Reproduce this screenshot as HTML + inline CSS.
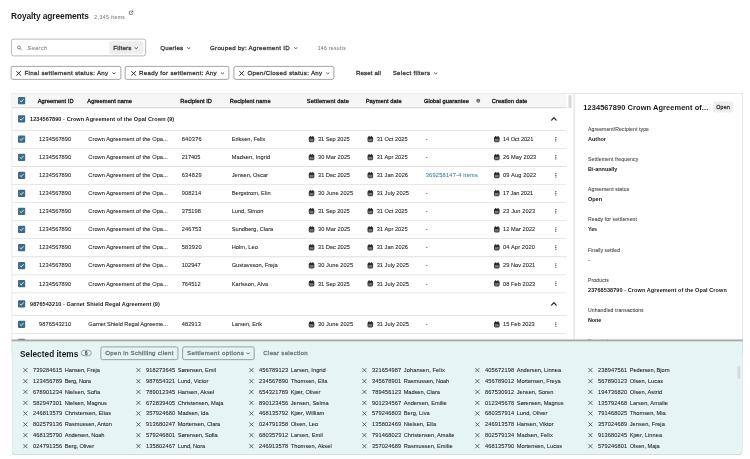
<!DOCTYPE html><html lang="en"><head><meta charset="utf-8"><title>Royalty agreements</title>
<style>html,body{margin:0;padding:0}
body{width:750px;height:459px;overflow:hidden;background:#ffffff;position:relative;font-family:"Liberation Sans", sans-serif;-webkit-font-smoothing:antialiased}
#app{position:absolute;left:0;top:0;width:3000.0px;height:1836.0px;overflow:hidden;transform:scale(0.25);transform-origin:0 0;backface-visibility:hidden}
#app div,#app svg,#app .t{position:absolute;box-sizing:content-box}
#app svg{overflow:visible}
.t{white-space:pre;display:block}</style></head><body><div id="app">
<svg style="left:515.6px;top:41.6px" width="17.2" height="17.2" viewBox="0 0 4.3 4.3"><path d="M1.7 0.7 H1.1 Q0.4 0.7 0.4 1.4 V3.2 Q0.4 3.9 1.1 3.9 H2.9 Q3.6 3.9 3.6 3.2 V2.6" fill="none" stroke="#333" stroke-width="0.65"/><path d="M2.5 0.4 H3.9 V1.8 M3.8 0.5 L2.1 2.2" fill="none" stroke="#333" stroke-width="0.65"/></svg>
<div style="left:44px;top:155.2px;width:534px;height:63.6px;border:3.6px solid #a2a2a2;border-radius:10px;background:#fff"></div>
<svg style="left:68.4px;top:181.6px" width="19.6" height="19.6" viewBox="0 0 4.4 4.4"><circle cx="1.8" cy="1.8" r="1.3" fill="none" stroke="#5e5e5e" stroke-width="0.65"/><path d="M2.8 2.8 L4 4" stroke="#5e5e5e" stroke-width="0.7" stroke-linecap="round"/></svg>
<div style="left:437.2px;top:165.2px;width:136.8px;height:51.6px;background:#eeeeee;border-radius:8px"></div>
<svg style="left:539.2px;top:188.6px" width="12" height="8.4" viewBox="0 0 3.0 2.10"><path d="M0.2 0.3 L1.5 1.5 L2.8 0.3" fill="none" stroke="#333" stroke-width="0.85" stroke-linecap="round" stroke-linejoin="round"/></svg>
<svg style="left:748.8px;top:188.6px" width="12" height="8.4" viewBox="0 0 3.0 2.10"><path d="M0.2 0.3 L1.5 1.5 L2.8 0.3" fill="none" stroke="#333" stroke-width="0.85" stroke-linecap="round" stroke-linejoin="round"/></svg>
<svg style="left:1176.8px;top:188.6px" width="12" height="8.4" viewBox="0 0 3.0 2.10"><path d="M0.2 0.3 L1.5 1.5 L2.8 0.3" fill="none" stroke="#333" stroke-width="0.85" stroke-linecap="round" stroke-linejoin="round"/></svg>
<div style="left:43.2px;top:264.4px;width:435.6px;height:48.4px;border:3.4px solid #858585;border-radius:8.8px;background:#fff"></div>
<svg style="left:64.8px;top:283.6px" width="19.2" height="19.2" viewBox="0 0 4.8 4.8"><path d="M0.4 0.4 L4.3999999999999995 4.3999999999999995 M4.3999999999999995 0.4 L0.4 4.3999999999999995" fill="none" stroke="#2a2a2a" stroke-width="1.0" stroke-linecap="round"/></svg>
<svg style="left:450.4px;top:290.2px" width="12" height="8.4" viewBox="0 0 3.0 2.10"><path d="M0.2 0.3 L1.5 1.5 L2.8 0.3" fill="none" stroke="#333" stroke-width="0.85" stroke-linecap="round" stroke-linejoin="round"/></svg>
<div style="left:499.2px;top:264.4px;width:411.6px;height:48.4px;border:3.4px solid #858585;border-radius:8.8px;background:#fff"></div>
<svg style="left:524.8px;top:283.6px" width="19.2" height="19.2" viewBox="0 0 4.8 4.8"><path d="M0.4 0.4 L4.3999999999999995 4.3999999999999995 M4.3999999999999995 0.4 L0.4 4.3999999999999995" fill="none" stroke="#2a2a2a" stroke-width="1.0" stroke-linecap="round"/></svg>
<svg style="left:884.4px;top:290.2px" width="12" height="8.4" viewBox="0 0 3.0 2.10"><path d="M0.2 0.3 L1.5 1.5 L2.8 0.3" fill="none" stroke="#333" stroke-width="0.85" stroke-linecap="round" stroke-linejoin="round"/></svg>
<div style="left:934px;top:264.4px;width:396.8px;height:48.4px;border:3.4px solid #858585;border-radius:8.8px;background:#fff"></div>
<svg style="left:956.8px;top:283.6px" width="19.2" height="19.2" viewBox="0 0 4.8 4.8"><path d="M0.4 0.4 L4.3999999999999995 4.3999999999999995 M4.3999999999999995 0.4 L0.4 4.3999999999999995" fill="none" stroke="#2a2a2a" stroke-width="1.0" stroke-linecap="round"/></svg>
<svg style="left:1304.8px;top:290.2px" width="12" height="8.4" viewBox="0 0 3.0 2.10"><path d="M0.2 0.3 L1.5 1.5 L2.8 0.3" fill="none" stroke="#333" stroke-width="0.85" stroke-linecap="round" stroke-linejoin="round"/></svg>
<svg style="left:1737.2px;top:290.2px" width="12" height="8.4" viewBox="0 0 3.0 2.10"><path d="M0.2 0.3 L1.5 1.5 L2.8 0.3" fill="none" stroke="#333" stroke-width="0.85" stroke-linecap="round" stroke-linejoin="round"/></svg>
<div style="left:46px;top:372px;width:2244.8px;height:1048px;border:3.2px solid #e3e3e3;border-bottom:none;background:#fff"></div>
<div style="left:49.2px;top:375.2px;width:2216.8px;height:56px;background:#f6f6f6"></div>
<div style="left:49.2px;top:429.2px;width:2216.8px;height:4px;background:#d4d4d4"></div>
<div style="left:2274.4px;top:380px;width:11.2px;height:53.6px;background:#d6d6d6;border-radius:5.6px"></div>
<svg style="left:72.4px;top:388.4px" width="28.8" height="28.8" viewBox="0 0 7 7"><rect x="0" y="0" width="7" height="7" rx="1" fill="#3d6b85"/><path d="M2 3.7 L3.1 4.8 L5.2 2.4" fill="none" stroke="#fff" stroke-width="0.8" stroke-linecap="round" stroke-linejoin="round"/></svg>
<svg style="left:1904.8px;top:394.8px" width="16" height="16" viewBox="0 0 4 4"><circle cx="2" cy="2" r="1.9" fill="#666"/><path d="M2 1.8 V3" stroke="#fff" stroke-width="0.5"/><circle cx="2" cy="1.05" r="0.3" fill="#fff"/></svg>
<svg style="left:72.4px;top:461.2px" width="28.8" height="28.8" viewBox="0 0 7 7"><rect x="0" y="0" width="7" height="7" rx="1" fill="#3d6b85"/><path d="M2 3.7 L3.1 4.8 L5.2 2.4" fill="none" stroke="#fff" stroke-width="0.8" stroke-linecap="round" stroke-linejoin="round"/></svg>
<svg style="left:2204px;top:468.2px" width="23.2" height="14.8" viewBox="0 0 5.8 3.70"><path d="M0.6 3.10 L2.9 0.7 L5.2 3.10" fill="none" stroke="#222" stroke-width="1.2" stroke-linecap="round" stroke-linejoin="round"/></svg>
<div style="left:49.2px;top:520px;width:2216.8px;height:3.2px;background:#dcdcdc"></div>
<svg style="left:72.4px;top:542.4px" width="28.8" height="28.8" viewBox="0 0 7 7"><rect x="0" y="0" width="7" height="7" rx="1" fill="#3d6b85"/><path d="M2 3.7 L3.1 4.8 L5.2 2.4" fill="none" stroke="#fff" stroke-width="0.8" stroke-linecap="round" stroke-linejoin="round"/></svg>
<svg style="left:1234.8px;top:543.6px" width="22.4" height="24.8" viewBox="0 0 5 5.6"><rect x="0.4" y="1" width="4.2" height="4.2" rx="0.7" fill="#777" stroke="#2a2a2a" stroke-width="0.8"/><rect x="0.4" y="1" width="4.2" height="1.6" fill="#2a2a2a"/><path d="M1.4 0.3 V1.3 M3.6 0.3 V1.3" stroke="#2a2a2a" stroke-width="0.8" stroke-linecap="round"/></svg>
<svg style="left:1469.6px;top:543.6px" width="22.4" height="24.8" viewBox="0 0 5 5.6"><rect x="0.4" y="1" width="4.2" height="4.2" rx="0.7" fill="#777" stroke="#2a2a2a" stroke-width="0.8"/><rect x="0.4" y="1" width="4.2" height="1.6" fill="#2a2a2a"/><path d="M1.4 0.3 V1.3 M3.6 0.3 V1.3" stroke="#2a2a2a" stroke-width="0.8" stroke-linecap="round"/></svg>
<svg style="left:1976px;top:543.6px" width="22.4" height="24.8" viewBox="0 0 5 5.6"><rect x="0.4" y="1" width="4.2" height="4.2" rx="0.7" fill="#777" stroke="#2a2a2a" stroke-width="0.8"/><rect x="0.4" y="1" width="4.2" height="1.6" fill="#2a2a2a"/><path d="M1.4 0.3 V1.3 M3.6 0.3 V1.3" stroke="#2a2a2a" stroke-width="0.8" stroke-linecap="round"/></svg>
<svg style="left:2220.8px;top:547.6px" width="4.8" height="18.4" viewBox="0 0 1.2 4.6"><circle cx="0.6" cy="0.6" r="0.6" fill="#222"/><circle cx="0.6" cy="2.3" r="0.6" fill="#222"/><circle cx="0.6" cy="4.0" r="0.6" fill="#222"/></svg>
<div style="left:49.2px;top:592.2px;width:2216.8px;height:3.2px;background:#e0e0e0"></div>
<svg style="left:72.4px;top:614.6px" width="28.8" height="28.8" viewBox="0 0 7 7"><rect x="0" y="0" width="7" height="7" rx="1" fill="#3d6b85"/><path d="M2 3.7 L3.1 4.8 L5.2 2.4" fill="none" stroke="#fff" stroke-width="0.8" stroke-linecap="round" stroke-linejoin="round"/></svg>
<svg style="left:1234.8px;top:615.8px" width="22.4" height="24.8" viewBox="0 0 5 5.6"><rect x="0.4" y="1" width="4.2" height="4.2" rx="0.7" fill="#777" stroke="#2a2a2a" stroke-width="0.8"/><rect x="0.4" y="1" width="4.2" height="1.6" fill="#2a2a2a"/><path d="M1.4 0.3 V1.3 M3.6 0.3 V1.3" stroke="#2a2a2a" stroke-width="0.8" stroke-linecap="round"/></svg>
<svg style="left:1469.6px;top:615.8px" width="22.4" height="24.8" viewBox="0 0 5 5.6"><rect x="0.4" y="1" width="4.2" height="4.2" rx="0.7" fill="#777" stroke="#2a2a2a" stroke-width="0.8"/><rect x="0.4" y="1" width="4.2" height="1.6" fill="#2a2a2a"/><path d="M1.4 0.3 V1.3 M3.6 0.3 V1.3" stroke="#2a2a2a" stroke-width="0.8" stroke-linecap="round"/></svg>
<svg style="left:1976px;top:615.8px" width="22.4" height="24.8" viewBox="0 0 5 5.6"><rect x="0.4" y="1" width="4.2" height="4.2" rx="0.7" fill="#777" stroke="#2a2a2a" stroke-width="0.8"/><rect x="0.4" y="1" width="4.2" height="1.6" fill="#2a2a2a"/><path d="M1.4 0.3 V1.3 M3.6 0.3 V1.3" stroke="#2a2a2a" stroke-width="0.8" stroke-linecap="round"/></svg>
<svg style="left:2220.8px;top:619.8px" width="4.8" height="18.4" viewBox="0 0 1.2 4.6"><circle cx="0.6" cy="0.6" r="0.6" fill="#222"/><circle cx="0.6" cy="2.3" r="0.6" fill="#222"/><circle cx="0.6" cy="4.0" r="0.6" fill="#222"/></svg>
<div style="left:49.2px;top:664.4px;width:2216.8px;height:3.2px;background:#e0e0e0"></div>
<svg style="left:72.4px;top:686.8px" width="28.8" height="28.8" viewBox="0 0 7 7"><rect x="0" y="0" width="7" height="7" rx="1" fill="#3d6b85"/><path d="M2 3.7 L3.1 4.8 L5.2 2.4" fill="none" stroke="#fff" stroke-width="0.8" stroke-linecap="round" stroke-linejoin="round"/></svg>
<svg style="left:1234.8px;top:688px" width="22.4" height="24.8" viewBox="0 0 5 5.6"><rect x="0.4" y="1" width="4.2" height="4.2" rx="0.7" fill="#777" stroke="#2a2a2a" stroke-width="0.8"/><rect x="0.4" y="1" width="4.2" height="1.6" fill="#2a2a2a"/><path d="M1.4 0.3 V1.3 M3.6 0.3 V1.3" stroke="#2a2a2a" stroke-width="0.8" stroke-linecap="round"/></svg>
<svg style="left:1469.6px;top:688px" width="22.4" height="24.8" viewBox="0 0 5 5.6"><rect x="0.4" y="1" width="4.2" height="4.2" rx="0.7" fill="#777" stroke="#2a2a2a" stroke-width="0.8"/><rect x="0.4" y="1" width="4.2" height="1.6" fill="#2a2a2a"/><path d="M1.4 0.3 V1.3 M3.6 0.3 V1.3" stroke="#2a2a2a" stroke-width="0.8" stroke-linecap="round"/></svg>
<svg style="left:1976px;top:688px" width="22.4" height="24.8" viewBox="0 0 5 5.6"><rect x="0.4" y="1" width="4.2" height="4.2" rx="0.7" fill="#777" stroke="#2a2a2a" stroke-width="0.8"/><rect x="0.4" y="1" width="4.2" height="1.6" fill="#2a2a2a"/><path d="M1.4 0.3 V1.3 M3.6 0.3 V1.3" stroke="#2a2a2a" stroke-width="0.8" stroke-linecap="round"/></svg>
<svg style="left:2220.8px;top:692px" width="4.8" height="18.4" viewBox="0 0 1.2 4.6"><circle cx="0.6" cy="0.6" r="0.6" fill="#222"/><circle cx="0.6" cy="2.3" r="0.6" fill="#222"/><circle cx="0.6" cy="4.0" r="0.6" fill="#222"/></svg>
<div style="left:49.2px;top:736.6px;width:2216.8px;height:3.2px;background:#e0e0e0"></div>
<svg style="left:72.4px;top:759px" width="28.8" height="28.8" viewBox="0 0 7 7"><rect x="0" y="0" width="7" height="7" rx="1" fill="#3d6b85"/><path d="M2 3.7 L3.1 4.8 L5.2 2.4" fill="none" stroke="#fff" stroke-width="0.8" stroke-linecap="round" stroke-linejoin="round"/></svg>
<svg style="left:1234.8px;top:760.2px" width="22.4" height="24.8" viewBox="0 0 5 5.6"><rect x="0.4" y="1" width="4.2" height="4.2" rx="0.7" fill="#777" stroke="#2a2a2a" stroke-width="0.8"/><rect x="0.4" y="1" width="4.2" height="1.6" fill="#2a2a2a"/><path d="M1.4 0.3 V1.3 M3.6 0.3 V1.3" stroke="#2a2a2a" stroke-width="0.8" stroke-linecap="round"/></svg>
<svg style="left:1469.6px;top:760.2px" width="22.4" height="24.8" viewBox="0 0 5 5.6"><rect x="0.4" y="1" width="4.2" height="4.2" rx="0.7" fill="#777" stroke="#2a2a2a" stroke-width="0.8"/><rect x="0.4" y="1" width="4.2" height="1.6" fill="#2a2a2a"/><path d="M1.4 0.3 V1.3 M3.6 0.3 V1.3" stroke="#2a2a2a" stroke-width="0.8" stroke-linecap="round"/></svg>
<svg style="left:1976px;top:760.2px" width="22.4" height="24.8" viewBox="0 0 5 5.6"><rect x="0.4" y="1" width="4.2" height="4.2" rx="0.7" fill="#777" stroke="#2a2a2a" stroke-width="0.8"/><rect x="0.4" y="1" width="4.2" height="1.6" fill="#2a2a2a"/><path d="M1.4 0.3 V1.3 M3.6 0.3 V1.3" stroke="#2a2a2a" stroke-width="0.8" stroke-linecap="round"/></svg>
<svg style="left:2220.8px;top:764.2px" width="4.8" height="18.4" viewBox="0 0 1.2 4.6"><circle cx="0.6" cy="0.6" r="0.6" fill="#222"/><circle cx="0.6" cy="2.3" r="0.6" fill="#222"/><circle cx="0.6" cy="4.0" r="0.6" fill="#222"/></svg>
<div style="left:49.2px;top:808.8px;width:2216.8px;height:3.2px;background:#e0e0e0"></div>
<svg style="left:72.4px;top:831.2px" width="28.8" height="28.8" viewBox="0 0 7 7"><rect x="0" y="0" width="7" height="7" rx="1" fill="#3d6b85"/><path d="M2 3.7 L3.1 4.8 L5.2 2.4" fill="none" stroke="#fff" stroke-width="0.8" stroke-linecap="round" stroke-linejoin="round"/></svg>
<svg style="left:1234.8px;top:832.4px" width="22.4" height="24.8" viewBox="0 0 5 5.6"><rect x="0.4" y="1" width="4.2" height="4.2" rx="0.7" fill="#777" stroke="#2a2a2a" stroke-width="0.8"/><rect x="0.4" y="1" width="4.2" height="1.6" fill="#2a2a2a"/><path d="M1.4 0.3 V1.3 M3.6 0.3 V1.3" stroke="#2a2a2a" stroke-width="0.8" stroke-linecap="round"/></svg>
<svg style="left:1469.6px;top:832.4px" width="22.4" height="24.8" viewBox="0 0 5 5.6"><rect x="0.4" y="1" width="4.2" height="4.2" rx="0.7" fill="#777" stroke="#2a2a2a" stroke-width="0.8"/><rect x="0.4" y="1" width="4.2" height="1.6" fill="#2a2a2a"/><path d="M1.4 0.3 V1.3 M3.6 0.3 V1.3" stroke="#2a2a2a" stroke-width="0.8" stroke-linecap="round"/></svg>
<svg style="left:1976px;top:832.4px" width="22.4" height="24.8" viewBox="0 0 5 5.6"><rect x="0.4" y="1" width="4.2" height="4.2" rx="0.7" fill="#777" stroke="#2a2a2a" stroke-width="0.8"/><rect x="0.4" y="1" width="4.2" height="1.6" fill="#2a2a2a"/><path d="M1.4 0.3 V1.3 M3.6 0.3 V1.3" stroke="#2a2a2a" stroke-width="0.8" stroke-linecap="round"/></svg>
<svg style="left:2220.8px;top:836.4px" width="4.8" height="18.4" viewBox="0 0 1.2 4.6"><circle cx="0.6" cy="0.6" r="0.6" fill="#222"/><circle cx="0.6" cy="2.3" r="0.6" fill="#222"/><circle cx="0.6" cy="4.0" r="0.6" fill="#222"/></svg>
<div style="left:49.2px;top:881px;width:2216.8px;height:3.2px;background:#e0e0e0"></div>
<svg style="left:72.4px;top:903.4px" width="28.8" height="28.8" viewBox="0 0 7 7"><rect x="0" y="0" width="7" height="7" rx="1" fill="#3d6b85"/><path d="M2 3.7 L3.1 4.8 L5.2 2.4" fill="none" stroke="#fff" stroke-width="0.8" stroke-linecap="round" stroke-linejoin="round"/></svg>
<svg style="left:1234.8px;top:904.6px" width="22.4" height="24.8" viewBox="0 0 5 5.6"><rect x="0.4" y="1" width="4.2" height="4.2" rx="0.7" fill="#777" stroke="#2a2a2a" stroke-width="0.8"/><rect x="0.4" y="1" width="4.2" height="1.6" fill="#2a2a2a"/><path d="M1.4 0.3 V1.3 M3.6 0.3 V1.3" stroke="#2a2a2a" stroke-width="0.8" stroke-linecap="round"/></svg>
<svg style="left:1469.6px;top:904.6px" width="22.4" height="24.8" viewBox="0 0 5 5.6"><rect x="0.4" y="1" width="4.2" height="4.2" rx="0.7" fill="#777" stroke="#2a2a2a" stroke-width="0.8"/><rect x="0.4" y="1" width="4.2" height="1.6" fill="#2a2a2a"/><path d="M1.4 0.3 V1.3 M3.6 0.3 V1.3" stroke="#2a2a2a" stroke-width="0.8" stroke-linecap="round"/></svg>
<svg style="left:1976px;top:904.6px" width="22.4" height="24.8" viewBox="0 0 5 5.6"><rect x="0.4" y="1" width="4.2" height="4.2" rx="0.7" fill="#777" stroke="#2a2a2a" stroke-width="0.8"/><rect x="0.4" y="1" width="4.2" height="1.6" fill="#2a2a2a"/><path d="M1.4 0.3 V1.3 M3.6 0.3 V1.3" stroke="#2a2a2a" stroke-width="0.8" stroke-linecap="round"/></svg>
<svg style="left:2220.8px;top:908.6px" width="4.8" height="18.4" viewBox="0 0 1.2 4.6"><circle cx="0.6" cy="0.6" r="0.6" fill="#222"/><circle cx="0.6" cy="2.3" r="0.6" fill="#222"/><circle cx="0.6" cy="4.0" r="0.6" fill="#222"/></svg>
<div style="left:49.2px;top:953.2px;width:2216.8px;height:3.2px;background:#e0e0e0"></div>
<svg style="left:72.4px;top:975.6px" width="28.8" height="28.8" viewBox="0 0 7 7"><rect x="0" y="0" width="7" height="7" rx="1" fill="#3d6b85"/><path d="M2 3.7 L3.1 4.8 L5.2 2.4" fill="none" stroke="#fff" stroke-width="0.8" stroke-linecap="round" stroke-linejoin="round"/></svg>
<svg style="left:1234.8px;top:976.8px" width="22.4" height="24.8" viewBox="0 0 5 5.6"><rect x="0.4" y="1" width="4.2" height="4.2" rx="0.7" fill="#777" stroke="#2a2a2a" stroke-width="0.8"/><rect x="0.4" y="1" width="4.2" height="1.6" fill="#2a2a2a"/><path d="M1.4 0.3 V1.3 M3.6 0.3 V1.3" stroke="#2a2a2a" stroke-width="0.8" stroke-linecap="round"/></svg>
<svg style="left:1469.6px;top:976.8px" width="22.4" height="24.8" viewBox="0 0 5 5.6"><rect x="0.4" y="1" width="4.2" height="4.2" rx="0.7" fill="#777" stroke="#2a2a2a" stroke-width="0.8"/><rect x="0.4" y="1" width="4.2" height="1.6" fill="#2a2a2a"/><path d="M1.4 0.3 V1.3 M3.6 0.3 V1.3" stroke="#2a2a2a" stroke-width="0.8" stroke-linecap="round"/></svg>
<svg style="left:1976px;top:976.8px" width="22.4" height="24.8" viewBox="0 0 5 5.6"><rect x="0.4" y="1" width="4.2" height="4.2" rx="0.7" fill="#777" stroke="#2a2a2a" stroke-width="0.8"/><rect x="0.4" y="1" width="4.2" height="1.6" fill="#2a2a2a"/><path d="M1.4 0.3 V1.3 M3.6 0.3 V1.3" stroke="#2a2a2a" stroke-width="0.8" stroke-linecap="round"/></svg>
<svg style="left:2220.8px;top:980.8px" width="4.8" height="18.4" viewBox="0 0 1.2 4.6"><circle cx="0.6" cy="0.6" r="0.6" fill="#222"/><circle cx="0.6" cy="2.3" r="0.6" fill="#222"/><circle cx="0.6" cy="4.0" r="0.6" fill="#222"/></svg>
<div style="left:49.2px;top:1025.4px;width:2216.8px;height:3.2px;background:#e0e0e0"></div>
<svg style="left:72.4px;top:1047.8px" width="28.8" height="28.8" viewBox="0 0 7 7"><rect x="0" y="0" width="7" height="7" rx="1" fill="#3d6b85"/><path d="M2 3.7 L3.1 4.8 L5.2 2.4" fill="none" stroke="#fff" stroke-width="0.8" stroke-linecap="round" stroke-linejoin="round"/></svg>
<svg style="left:1234.8px;top:1049px" width="22.4" height="24.8" viewBox="0 0 5 5.6"><rect x="0.4" y="1" width="4.2" height="4.2" rx="0.7" fill="#777" stroke="#2a2a2a" stroke-width="0.8"/><rect x="0.4" y="1" width="4.2" height="1.6" fill="#2a2a2a"/><path d="M1.4 0.3 V1.3 M3.6 0.3 V1.3" stroke="#2a2a2a" stroke-width="0.8" stroke-linecap="round"/></svg>
<svg style="left:1469.6px;top:1049px" width="22.4" height="24.8" viewBox="0 0 5 5.6"><rect x="0.4" y="1" width="4.2" height="4.2" rx="0.7" fill="#777" stroke="#2a2a2a" stroke-width="0.8"/><rect x="0.4" y="1" width="4.2" height="1.6" fill="#2a2a2a"/><path d="M1.4 0.3 V1.3 M3.6 0.3 V1.3" stroke="#2a2a2a" stroke-width="0.8" stroke-linecap="round"/></svg>
<svg style="left:1976px;top:1049px" width="22.4" height="24.8" viewBox="0 0 5 5.6"><rect x="0.4" y="1" width="4.2" height="4.2" rx="0.7" fill="#777" stroke="#2a2a2a" stroke-width="0.8"/><rect x="0.4" y="1" width="4.2" height="1.6" fill="#2a2a2a"/><path d="M1.4 0.3 V1.3 M3.6 0.3 V1.3" stroke="#2a2a2a" stroke-width="0.8" stroke-linecap="round"/></svg>
<svg style="left:2220.8px;top:1053px" width="4.8" height="18.4" viewBox="0 0 1.2 4.6"><circle cx="0.6" cy="0.6" r="0.6" fill="#222"/><circle cx="0.6" cy="2.3" r="0.6" fill="#222"/><circle cx="0.6" cy="4.0" r="0.6" fill="#222"/></svg>
<div style="left:49.2px;top:1097.6px;width:2216.8px;height:3.2px;background:#e0e0e0"></div>
<svg style="left:72.4px;top:1120px" width="28.8" height="28.8" viewBox="0 0 7 7"><rect x="0" y="0" width="7" height="7" rx="1" fill="#3d6b85"/><path d="M2 3.7 L3.1 4.8 L5.2 2.4" fill="none" stroke="#fff" stroke-width="0.8" stroke-linecap="round" stroke-linejoin="round"/></svg>
<svg style="left:1234.8px;top:1121.2px" width="22.4" height="24.8" viewBox="0 0 5 5.6"><rect x="0.4" y="1" width="4.2" height="4.2" rx="0.7" fill="#777" stroke="#2a2a2a" stroke-width="0.8"/><rect x="0.4" y="1" width="4.2" height="1.6" fill="#2a2a2a"/><path d="M1.4 0.3 V1.3 M3.6 0.3 V1.3" stroke="#2a2a2a" stroke-width="0.8" stroke-linecap="round"/></svg>
<svg style="left:1469.6px;top:1121.2px" width="22.4" height="24.8" viewBox="0 0 5 5.6"><rect x="0.4" y="1" width="4.2" height="4.2" rx="0.7" fill="#777" stroke="#2a2a2a" stroke-width="0.8"/><rect x="0.4" y="1" width="4.2" height="1.6" fill="#2a2a2a"/><path d="M1.4 0.3 V1.3 M3.6 0.3 V1.3" stroke="#2a2a2a" stroke-width="0.8" stroke-linecap="round"/></svg>
<svg style="left:1976px;top:1121.2px" width="22.4" height="24.8" viewBox="0 0 5 5.6"><rect x="0.4" y="1" width="4.2" height="4.2" rx="0.7" fill="#777" stroke="#2a2a2a" stroke-width="0.8"/><rect x="0.4" y="1" width="4.2" height="1.6" fill="#2a2a2a"/><path d="M1.4 0.3 V1.3 M3.6 0.3 V1.3" stroke="#2a2a2a" stroke-width="0.8" stroke-linecap="round"/></svg>
<svg style="left:2220.8px;top:1125.2px" width="4.8" height="18.4" viewBox="0 0 1.2 4.6"><circle cx="0.6" cy="0.6" r="0.6" fill="#222"/><circle cx="0.6" cy="2.3" r="0.6" fill="#222"/><circle cx="0.6" cy="4.0" r="0.6" fill="#222"/></svg>
<div style="left:49.2px;top:1169.8px;width:2216.8px;height:3.2px;background:#e0e0e0"></div>
<svg style="left:72.4px;top:1201.4px" width="28.8" height="28.8" viewBox="0 0 7 7"><rect x="0" y="0" width="7" height="7" rx="1" fill="#3d6b85"/><path d="M2 3.7 L3.1 4.8 L5.2 2.4" fill="none" stroke="#fff" stroke-width="0.8" stroke-linecap="round" stroke-linejoin="round"/></svg>
<svg style="left:2204px;top:1208.4px" width="23.2" height="14.8" viewBox="0 0 5.8 3.70"><path d="M0.6 3.10 L2.9 0.7 L5.2 3.10" fill="none" stroke="#222" stroke-width="1.2" stroke-linecap="round" stroke-linejoin="round"/></svg>
<div style="left:49.2px;top:1260.2px;width:2216.8px;height:3.2px;background:#dcdcdc"></div>
<svg style="left:72.4px;top:1283.4px" width="28.8" height="28.8" viewBox="0 0 7 7"><rect x="0" y="0" width="7" height="7" rx="1" fill="#3d6b85"/><path d="M2 3.7 L3.1 4.8 L5.2 2.4" fill="none" stroke="#fff" stroke-width="0.8" stroke-linecap="round" stroke-linejoin="round"/></svg>
<svg style="left:1234.8px;top:1284.6px" width="22.4" height="24.8" viewBox="0 0 5 5.6"><rect x="0.4" y="1" width="4.2" height="4.2" rx="0.7" fill="#777" stroke="#2a2a2a" stroke-width="0.8"/><rect x="0.4" y="1" width="4.2" height="1.6" fill="#2a2a2a"/><path d="M1.4 0.3 V1.3 M3.6 0.3 V1.3" stroke="#2a2a2a" stroke-width="0.8" stroke-linecap="round"/></svg>
<svg style="left:1469.6px;top:1284.6px" width="22.4" height="24.8" viewBox="0 0 5 5.6"><rect x="0.4" y="1" width="4.2" height="4.2" rx="0.7" fill="#777" stroke="#2a2a2a" stroke-width="0.8"/><rect x="0.4" y="1" width="4.2" height="1.6" fill="#2a2a2a"/><path d="M1.4 0.3 V1.3 M3.6 0.3 V1.3" stroke="#2a2a2a" stroke-width="0.8" stroke-linecap="round"/></svg>
<svg style="left:1976px;top:1284.6px" width="22.4" height="24.8" viewBox="0 0 5 5.6"><rect x="0.4" y="1" width="4.2" height="4.2" rx="0.7" fill="#777" stroke="#2a2a2a" stroke-width="0.8"/><rect x="0.4" y="1" width="4.2" height="1.6" fill="#2a2a2a"/><path d="M1.4 0.3 V1.3 M3.6 0.3 V1.3" stroke="#2a2a2a" stroke-width="0.8" stroke-linecap="round"/></svg>
<svg style="left:2220.8px;top:1288.6px" width="4.8" height="18.4" viewBox="0 0 1.2 4.6"><circle cx="0.6" cy="0.6" r="0.6" fill="#222"/><circle cx="0.6" cy="2.3" r="0.6" fill="#222"/><circle cx="0.6" cy="4.0" r="0.6" fill="#222"/></svg>
<div style="left:49.2px;top:1333.2px;width:2216.8px;height:3.2px;background:#e0e0e0"></div>
<svg style="left:72.4px;top:1354.6px" width="28.8" height="28.8" viewBox="0 0 7 7"><rect x="0" y="0" width="7" height="7" rx="1" fill="#3d6b85"/><path d="M2 3.7 L3.1 4.8 L5.2 2.4" fill="none" stroke="#fff" stroke-width="0.8" stroke-linecap="round" stroke-linejoin="round"/></svg>
<div style="left:2296.8px;top:372.8px;width:668px;height:1048px;border:3.2px solid #e0e0e0;border-bottom:none;background:#fff"></div>
<div style="left:2852px;top:405.6px;width:80.8px;height:44.8px;background:#efefef;border-radius:8px"></div>
<span class="t" style="left:44px;top:41.41px;line-height:46.78px;font-size:33.41px;color:#1a1a1a;font-weight:700;letter-spacing:-0.35px;">Royalty agreements</span>
<span class="t" style="left:377.2px;top:54.61px;line-height:28.38px;font-size:20.27px;color:#7a7a7a;-webkit-text-stroke:0.28px #7a7a7a;letter-spacing:1.76px;">2,345 items</span>
<span class="t" style="left:109.2px;top:174.44px;line-height:33.53px;font-size:23.95px;color:#888;-webkit-text-stroke:0.28px #888;font-style:italic;letter-spacing:0.69px;">Search</span>
<span class="t" style="left:453.2px;top:173.95px;line-height:34.5px;font-size:24.64px;color:#333;-webkit-text-stroke:1.04px #333;letter-spacing:0.93px;">Filters</span>
<span class="t" style="left:641.2px;top:173.95px;line-height:34.5px;font-size:24.64px;color:#333;-webkit-text-stroke:1.04px #333;letter-spacing:0.82px;">Queries</span>
<span class="t" style="left:840px;top:173.95px;line-height:34.5px;font-size:24.64px;color:#333;-webkit-text-stroke:1.04px #333;letter-spacing:1.12px;">Grouped by: Agreement ID</span>
<span class="t" style="left:1270.8px;top:177.01px;line-height:28.38px;font-size:20.27px;color:#7a7a7a;-webkit-text-stroke:0.28px #7a7a7a;letter-spacing:1.29px;">146 results</span>
<span class="t" style="left:98px;top:275.55px;line-height:34.5px;font-size:24.64px;color:#333;-webkit-text-stroke:1.04px #333;letter-spacing:1.24px;">Final settlement status: Any</span>
<span class="t" style="left:556px;top:275.55px;line-height:34.5px;font-size:24.64px;color:#333;-webkit-text-stroke:1.04px #333;letter-spacing:1.19px;">Ready for settlement: Any</span>
<span class="t" style="left:990px;top:275.55px;line-height:34.5px;font-size:24.64px;color:#333;-webkit-text-stroke:1.04px #333;letter-spacing:1.25px;">Open/Closed status: Any</span>
<span class="t" style="left:1424px;top:275.55px;line-height:34.5px;font-size:24.64px;color:#333;-webkit-text-stroke:1.04px #333;letter-spacing:0.46px;">Reset all</span>
<span class="t" style="left:1570.8px;top:275.55px;line-height:34.5px;font-size:24.64px;color:#333;-webkit-text-stroke:1.04px #333;letter-spacing:1.16px;">Select filters</span>
<span class="t" style="left:150.8px;top:387.21px;line-height:31.98px;font-size:22.84px;color:#222;-webkit-text-stroke:1.32px #222;letter-spacing:0.26px;">Agreement ID</span>
<span class="t" style="left:349.2px;top:387.21px;line-height:31.98px;font-size:22.84px;color:#222;-webkit-text-stroke:1.32px #222;letter-spacing:0.26px;">Agreement name</span>
<span class="t" style="left:721.2px;top:387.21px;line-height:31.98px;font-size:22.84px;color:#222;-webkit-text-stroke:1.32px #222;letter-spacing:0.2px;">Recipient ID</span>
<span class="t" style="left:918.8px;top:387.21px;line-height:31.98px;font-size:22.84px;color:#222;-webkit-text-stroke:1.32px #222;letter-spacing:0.38px;">Recipient name</span>
<span class="t" style="left:1226.8px;top:387.21px;line-height:31.98px;font-size:22.84px;color:#222;-webkit-text-stroke:1.32px #222;letter-spacing:0.61px;">Settlement date</span>
<span class="t" style="left:1462.8px;top:387.21px;line-height:31.98px;font-size:22.84px;color:#222;-webkit-text-stroke:1.32px #222;letter-spacing:0.26px;">Payment date</span>
<span class="t" style="left:1696px;top:387.21px;line-height:31.98px;font-size:22.84px;color:#222;-webkit-text-stroke:1.32px #222;letter-spacing:0.3px;">Global guarantee</span>
<span class="t" style="left:1967.2px;top:387.21px;line-height:31.98px;font-size:22.84px;color:#222;-webkit-text-stroke:1.32px #222;letter-spacing:0.4px;">Creation date</span>
<span class="t" style="left:120px;top:460.21px;line-height:30.78px;font-size:21.98px;color:#1a1a1a;font-weight:700;letter-spacing:0.37px;">1234567890 - Crown Agreement of the Opal Crown (9)</span>
<span class="t" style="left:156px;top:540.93px;line-height:31.75px;font-size:22.68px;color:#222;-webkit-text-stroke:0.28px #222;letter-spacing:0.31px;">1234567890</span>
<span class="t" style="left:353.2px;top:540.93px;line-height:31.75px;font-size:22.68px;color:#222;-webkit-text-stroke:0.28px #222;letter-spacing:0.21px;">Crown Agreement of the Opa...</span>
<span class="t" style="left:726.8px;top:540.93px;line-height:31.75px;font-size:22.68px;color:#222;-webkit-text-stroke:0.28px #222;letter-spacing:0.92px;">840376</span>
<span class="t" style="left:926.8px;top:540.93px;line-height:31.75px;font-size:22.68px;color:#222;-webkit-text-stroke:0.28px #222;letter-spacing:-0.12px;">Eriksen, Felix</span>
<span class="t" style="left:1272px;top:540.93px;line-height:31.75px;font-size:22.68px;color:#222;-webkit-text-stroke:0.28px #222;letter-spacing:-0.16px;">31 Sep 2025</span>
<span class="t" style="left:1506.8px;top:540.93px;line-height:31.75px;font-size:22.68px;color:#222;-webkit-text-stroke:0.28px #222;letter-spacing:0.04px;">31 Oct 2025</span>
<span class="t" style="left:1702.8px;top:540.93px;line-height:31.75px;font-size:22.68px;color:#222;-webkit-text-stroke:0.28px #222;letter-spacing:0.45px;">-</span>
<span class="t" style="left:2012px;top:540.93px;line-height:31.75px;font-size:22.68px;color:#222;-webkit-text-stroke:0.28px #222;letter-spacing:-0.21px;">14 Oct 2021</span>
<span class="t" style="left:156px;top:613.13px;line-height:31.75px;font-size:22.68px;color:#222;-webkit-text-stroke:0.28px #222;letter-spacing:0.31px;">1234567890</span>
<span class="t" style="left:353.2px;top:613.13px;line-height:31.75px;font-size:22.68px;color:#222;-webkit-text-stroke:0.28px #222;letter-spacing:0.21px;">Crown Agreement of the Opa...</span>
<span class="t" style="left:726.8px;top:613.13px;line-height:31.75px;font-size:22.68px;color:#222;-webkit-text-stroke:0.28px #222;letter-spacing:-0.21px;">217405</span>
<span class="t" style="left:926.8px;top:613.13px;line-height:31.75px;font-size:22.68px;color:#222;-webkit-text-stroke:0.28px #222;letter-spacing:0.31px;">Madsen, Ingrid</span>
<span class="t" style="left:1272px;top:613.13px;line-height:31.75px;font-size:22.68px;color:#222;-webkit-text-stroke:0.28px #222;letter-spacing:0.17px;">30 Mar 2025</span>
<span class="t" style="left:1506.8px;top:613.13px;line-height:31.75px;font-size:22.68px;color:#222;-webkit-text-stroke:0.28px #222;letter-spacing:0.15px;">31 Apr 2025</span>
<span class="t" style="left:1702.8px;top:613.13px;line-height:31.75px;font-size:22.68px;color:#222;-webkit-text-stroke:0.28px #222;letter-spacing:0.45px;">-</span>
<span class="t" style="left:2012px;top:613.13px;line-height:31.75px;font-size:22.68px;color:#222;-webkit-text-stroke:0.28px #222;letter-spacing:0.19px;">26 May 2023</span>
<span class="t" style="left:156px;top:685.33px;line-height:31.75px;font-size:22.68px;color:#222;-webkit-text-stroke:0.28px #222;letter-spacing:0.31px;">1234567890</span>
<span class="t" style="left:353.2px;top:685.33px;line-height:31.75px;font-size:22.68px;color:#222;-webkit-text-stroke:0.28px #222;letter-spacing:0.21px;">Crown Agreement of the Opa...</span>
<span class="t" style="left:726.8px;top:685.33px;line-height:31.75px;font-size:22.68px;color:#222;-webkit-text-stroke:0.28px #222;letter-spacing:0.92px;">634829</span>
<span class="t" style="left:926.8px;top:685.33px;line-height:31.75px;font-size:22.68px;color:#222;-webkit-text-stroke:0.28px #222;letter-spacing:-0.08px;">Jensen, Oscar</span>
<span class="t" style="left:1272px;top:685.33px;line-height:31.75px;font-size:22.68px;color:#222;-webkit-text-stroke:0.28px #222;letter-spacing:-0.05px;">31 Dec 2025</span>
<span class="t" style="left:1506.8px;top:685.33px;line-height:31.75px;font-size:22.68px;color:#222;-webkit-text-stroke:0.28px #222;letter-spacing:0.03px;">31 Jan 2026</span>
<span class="t" style="left:1702.8px;top:685.33px;line-height:31.75px;font-size:22.68px;color:#3f7f93;-webkit-text-stroke:0.28px #3f7f93;letter-spacing:0.89px;">369258147-4 items</span>
<span class="t" style="left:2012px;top:685.33px;line-height:31.75px;font-size:22.68px;color:#222;-webkit-text-stroke:0.28px #222;letter-spacing:0.53px;">09 Aug 2022</span>
<span class="t" style="left:156px;top:757.53px;line-height:31.75px;font-size:22.68px;color:#222;-webkit-text-stroke:0.28px #222;letter-spacing:0.31px;">1234567890</span>
<span class="t" style="left:353.2px;top:757.53px;line-height:31.75px;font-size:22.68px;color:#222;-webkit-text-stroke:0.28px #222;letter-spacing:0.21px;">Crown Agreement of the Opa...</span>
<span class="t" style="left:726.8px;top:757.53px;line-height:31.75px;font-size:22.68px;color:#222;-webkit-text-stroke:0.28px #222;letter-spacing:0.45px;">908214</span>
<span class="t" style="left:926.8px;top:757.53px;line-height:31.75px;font-size:22.68px;color:#222;-webkit-text-stroke:0.28px #222;letter-spacing:0.04px;">Bergstrom, Elin</span>
<span class="t" style="left:1272px;top:757.53px;line-height:31.75px;font-size:22.68px;color:#222;-webkit-text-stroke:0.28px #222;letter-spacing:0.31px;">30 June 2025</span>
<span class="t" style="left:1506.8px;top:757.53px;line-height:31.75px;font-size:22.68px;color:#222;-webkit-text-stroke:0.28px #222;letter-spacing:0.05px;">31 July 2025</span>
<span class="t" style="left:1702.8px;top:757.53px;line-height:31.75px;font-size:22.68px;color:#222;-webkit-text-stroke:0.28px #222;letter-spacing:0.45px;">-</span>
<span class="t" style="left:2012px;top:757.53px;line-height:31.75px;font-size:22.68px;color:#222;-webkit-text-stroke:0.28px #222;letter-spacing:-0.44px;">17 Jan 2021</span>
<span class="t" style="left:156px;top:829.73px;line-height:31.75px;font-size:22.68px;color:#222;-webkit-text-stroke:0.28px #222;letter-spacing:0.31px;">1234567890</span>
<span class="t" style="left:353.2px;top:829.73px;line-height:31.75px;font-size:22.68px;color:#222;-webkit-text-stroke:0.28px #222;letter-spacing:0.21px;">Crown Agreement of the Opa...</span>
<span class="t" style="left:726.8px;top:829.73px;line-height:31.75px;font-size:22.68px;color:#222;-webkit-text-stroke:0.28px #222;letter-spacing:0.25px;">375198</span>
<span class="t" style="left:926.8px;top:829.73px;line-height:31.75px;font-size:22.68px;color:#222;-webkit-text-stroke:0.28px #222;letter-spacing:-0.08px;">Lund, Simon</span>
<span class="t" style="left:1272px;top:829.73px;line-height:31.75px;font-size:22.68px;color:#222;-webkit-text-stroke:0.28px #222;letter-spacing:-0.16px;">31 Sep 2025</span>
<span class="t" style="left:1506.8px;top:829.73px;line-height:31.75px;font-size:22.68px;color:#222;-webkit-text-stroke:0.28px #222;letter-spacing:0.04px;">31 Oct 2025</span>
<span class="t" style="left:1702.8px;top:829.73px;line-height:31.75px;font-size:22.68px;color:#222;-webkit-text-stroke:0.28px #222;letter-spacing:0.45px;">-</span>
<span class="t" style="left:2012px;top:829.73px;line-height:31.75px;font-size:22.68px;color:#222;-webkit-text-stroke:0.28px #222;letter-spacing:0.4px;">23 Jun 2023</span>
<span class="t" style="left:156px;top:901.93px;line-height:31.75px;font-size:22.68px;color:#222;-webkit-text-stroke:0.28px #222;letter-spacing:0.31px;">1234567890</span>
<span class="t" style="left:353.2px;top:901.93px;line-height:31.75px;font-size:22.68px;color:#222;-webkit-text-stroke:0.28px #222;letter-spacing:0.21px;">Crown Agreement of the Opa...</span>
<span class="t" style="left:726.8px;top:901.93px;line-height:31.75px;font-size:22.68px;color:#222;-webkit-text-stroke:0.28px #222;letter-spacing:0.72px;">246753</span>
<span class="t" style="left:926.8px;top:901.93px;line-height:31.75px;font-size:22.68px;color:#222;-webkit-text-stroke:0.28px #222;letter-spacing:0.08px;">Sundberg, Clara</span>
<span class="t" style="left:1272px;top:901.93px;line-height:31.75px;font-size:22.68px;color:#222;-webkit-text-stroke:0.28px #222;letter-spacing:0.17px;">30 Mar 2025</span>
<span class="t" style="left:1506.8px;top:901.93px;line-height:31.75px;font-size:22.68px;color:#222;-webkit-text-stroke:0.28px #222;letter-spacing:0.15px;">31 Apr 2025</span>
<span class="t" style="left:1702.8px;top:901.93px;line-height:31.75px;font-size:22.68px;color:#222;-webkit-text-stroke:0.28px #222;letter-spacing:0.45px;">-</span>
<span class="t" style="left:2012px;top:901.93px;line-height:31.75px;font-size:22.68px;color:#222;-webkit-text-stroke:0.28px #222;letter-spacing:0.17px;">12 Mar 2022</span>
<span class="t" style="left:156px;top:974.13px;line-height:31.75px;font-size:22.68px;color:#222;-webkit-text-stroke:0.28px #222;letter-spacing:0.31px;">1234567890</span>
<span class="t" style="left:353.2px;top:974.13px;line-height:31.75px;font-size:22.68px;color:#222;-webkit-text-stroke:0.28px #222;letter-spacing:0.21px;">Crown Agreement of the Opa...</span>
<span class="t" style="left:726.8px;top:974.13px;line-height:31.75px;font-size:22.68px;color:#222;-webkit-text-stroke:0.28px #222;letter-spacing:0.92px;">583920</span>
<span class="t" style="left:926.8px;top:974.13px;line-height:31.75px;font-size:22.68px;color:#222;-webkit-text-stroke:0.28px #222;letter-spacing:0.2px;">Holm, Leo</span>
<span class="t" style="left:1272px;top:974.13px;line-height:31.75px;font-size:22.68px;color:#222;-webkit-text-stroke:0.28px #222;letter-spacing:-0.05px;">31 Dec 2025</span>
<span class="t" style="left:1506.8px;top:974.13px;line-height:31.75px;font-size:22.68px;color:#222;-webkit-text-stroke:0.28px #222;letter-spacing:0.03px;">31 Jan 2026</span>
<span class="t" style="left:1702.8px;top:974.13px;line-height:31.75px;font-size:22.68px;color:#222;-webkit-text-stroke:0.28px #222;letter-spacing:0.45px;">-</span>
<span class="t" style="left:2012px;top:974.13px;line-height:31.75px;font-size:22.68px;color:#222;-webkit-text-stroke:0.28px #222;letter-spacing:0.52px;">04 Apr 2020</span>
<span class="t" style="left:156px;top:1046.33px;line-height:31.75px;font-size:22.68px;color:#222;-webkit-text-stroke:0.28px #222;letter-spacing:0.31px;">1234567890</span>
<span class="t" style="left:353.2px;top:1046.33px;line-height:31.75px;font-size:22.68px;color:#222;-webkit-text-stroke:0.28px #222;letter-spacing:0.21px;">Crown Agreement of the Opa...</span>
<span class="t" style="left:726.8px;top:1046.33px;line-height:31.75px;font-size:22.68px;color:#222;-webkit-text-stroke:0.28px #222;letter-spacing:0.05px;">102947</span>
<span class="t" style="left:926.8px;top:1046.33px;line-height:31.75px;font-size:22.68px;color:#222;-webkit-text-stroke:0.28px #222;letter-spacing:-0.02px;">Gustavsson, Freja</span>
<span class="t" style="left:1272px;top:1046.33px;line-height:31.75px;font-size:22.68px;color:#222;-webkit-text-stroke:0.28px #222;letter-spacing:0.31px;">30 June 2025</span>
<span class="t" style="left:1506.8px;top:1046.33px;line-height:31.75px;font-size:22.68px;color:#222;-webkit-text-stroke:0.28px #222;letter-spacing:0.05px;">31 July 2025</span>
<span class="t" style="left:1702.8px;top:1046.33px;line-height:31.75px;font-size:22.68px;color:#222;-webkit-text-stroke:0.28px #222;letter-spacing:0.45px;">-</span>
<span class="t" style="left:2012px;top:1046.33px;line-height:31.75px;font-size:22.68px;color:#222;-webkit-text-stroke:0.28px #222;letter-spacing:0.05px;">29 Nov 2021</span>
<span class="t" style="left:156px;top:1118.53px;line-height:31.75px;font-size:22.68px;color:#222;-webkit-text-stroke:0.28px #222;letter-spacing:0.31px;">1234567890</span>
<span class="t" style="left:353.2px;top:1118.53px;line-height:31.75px;font-size:22.68px;color:#222;-webkit-text-stroke:0.28px #222;letter-spacing:0.21px;">Crown Agreement of the Opa...</span>
<span class="t" style="left:726.8px;top:1118.53px;line-height:31.75px;font-size:22.68px;color:#222;-webkit-text-stroke:0.28px #222;letter-spacing:0.05px;">764512</span>
<span class="t" style="left:926.8px;top:1118.53px;line-height:31.75px;font-size:22.68px;color:#222;-webkit-text-stroke:0.28px #222;letter-spacing:0.19px;">Karlsson, Alva</span>
<span class="t" style="left:1272px;top:1118.53px;line-height:31.75px;font-size:22.68px;color:#222;-webkit-text-stroke:0.28px #222;letter-spacing:-0.16px;">31 Sep 2025</span>
<span class="t" style="left:1506.8px;top:1118.53px;line-height:31.75px;font-size:22.68px;color:#222;-webkit-text-stroke:0.28px #222;letter-spacing:0.05px;">31 July 2025</span>
<span class="t" style="left:1702.8px;top:1118.53px;line-height:31.75px;font-size:22.68px;color:#222;-webkit-text-stroke:0.28px #222;letter-spacing:0.45px;">-</span>
<span class="t" style="left:2012px;top:1118.53px;line-height:31.75px;font-size:22.68px;color:#222;-webkit-text-stroke:0.28px #222;letter-spacing:0.17px;">08 Feb 2023</span>
<span class="t" style="left:120px;top:1200.41px;line-height:30.78px;font-size:21.98px;color:#1a1a1a;font-weight:700;letter-spacing:0.35px;">9876543210 - Garnet Shield Regal Agreement (9)</span>
<span class="t" style="left:156px;top:1281.93px;line-height:31.75px;font-size:22.68px;color:#222;-webkit-text-stroke:0.28px #222;letter-spacing:0.31px;">9876543210</span>
<span class="t" style="left:353.2px;top:1281.93px;line-height:31.75px;font-size:22.68px;color:#222;-webkit-text-stroke:0.28px #222;letter-spacing:-0.05px;">Garnet Shield Regal Agreeme...</span>
<span class="t" style="left:726.8px;top:1281.93px;line-height:31.75px;font-size:22.68px;color:#222;-webkit-text-stroke:0.28px #222;letter-spacing:0.25px;">482913</span>
<span class="t" style="left:926.8px;top:1281.93px;line-height:31.75px;font-size:22.68px;color:#222;-webkit-text-stroke:0.28px #222;letter-spacing:0.02px;">Larsen, Erik</span>
<span class="t" style="left:1272px;top:1281.93px;line-height:31.75px;font-size:22.68px;color:#222;-webkit-text-stroke:0.28px #222;letter-spacing:0.31px;">30 June 2025</span>
<span class="t" style="left:1506.8px;top:1281.93px;line-height:31.75px;font-size:22.68px;color:#222;-webkit-text-stroke:0.28px #222;letter-spacing:0.05px;">31 July 2025</span>
<span class="t" style="left:1702.8px;top:1281.93px;line-height:31.75px;font-size:22.68px;color:#222;-webkit-text-stroke:0.28px #222;letter-spacing:0.45px;">-</span>
<span class="t" style="left:2012px;top:1281.93px;line-height:31.75px;font-size:22.68px;color:#222;-webkit-text-stroke:0.28px #222;letter-spacing:-0.05px;">15 Feb 2023</span>
<span class="t" style="left:2333.2px;top:408.38px;line-height:41.63px;font-size:29.74px;color:#1a1a1a;font-weight:700;letter-spacing:0.32px;">1234567890 Crown Agreement of...</span>
<span class="t" style="left:2864.8px;top:413.66px;line-height:29.48px;font-size:21.06px;color:#333;-webkit-text-stroke:1.04px #333;letter-spacing:1.13px;">Open</span>
<span class="t" style="left:2352px;top:501.81px;line-height:28.38px;font-size:20.27px;color:#444;-webkit-text-stroke:0.28px #444;letter-spacing:0.46px;">Agreement/Recipient type</span>
<span class="t" style="left:2352px;top:540.21px;line-height:30.78px;font-size:21.98px;color:#1a1a1a;font-weight:700;letter-spacing:-0.01px;">Author</span>
<span class="t" style="left:2352px;top:621.81px;line-height:28.38px;font-size:20.27px;color:#444;-webkit-text-stroke:0.28px #444;letter-spacing:0.49px;">Settlement frequency</span>
<span class="t" style="left:2352px;top:661.41px;line-height:30.78px;font-size:21.98px;color:#1a1a1a;font-weight:700;letter-spacing:-0.12px;">Bi-annually</span>
<span class="t" style="left:2352px;top:741.81px;line-height:28.38px;font-size:20.27px;color:#444;-webkit-text-stroke:0.28px #444;letter-spacing:0.41px;">Agreement status</span>
<span class="t" style="left:2352px;top:781.41px;line-height:30.78px;font-size:21.98px;color:#1a1a1a;font-weight:700;letter-spacing:-0.05px;">Open</span>
<span class="t" style="left:2352px;top:863.81px;line-height:28.38px;font-size:20.27px;color:#444;-webkit-text-stroke:0.28px #444;letter-spacing:0.46px;">Ready for settlement</span>
<span class="t" style="left:2352px;top:901.81px;line-height:30.78px;font-size:21.98px;color:#1a1a1a;font-weight:700;letter-spacing:-0.64px;">Yes</span>
<span class="t" style="left:2352px;top:985.81px;line-height:28.38px;font-size:20.27px;color:#444;-webkit-text-stroke:0.28px #444;letter-spacing:0.28px;">Finally settled</span>
<span class="t" style="left:2352px;top:1023.81px;line-height:30.78px;font-size:21.98px;color:#1a1a1a;font-weight:700;letter-spacing:0.68px;">-</span>
<span class="t" style="left:2352px;top:1105.81px;line-height:28.38px;font-size:20.27px;color:#444;-webkit-text-stroke:0.28px #444;letter-spacing:0.51px;">Products</span>
<span class="t" style="left:2352px;top:1145.41px;line-height:30.78px;font-size:21.98px;color:#1a1a1a;font-weight:700;letter-spacing:0.38px;">23768538790 - Crown Agreement of the Opal Crown</span>
<span class="t" style="left:2352px;top:1227.01px;line-height:28.38px;font-size:20.27px;color:#444;-webkit-text-stroke:0.28px #444;letter-spacing:0.46px;">Unhandled transactions</span>
<span class="t" style="left:2352px;top:1265.41px;line-height:30.78px;font-size:21.98px;color:#1a1a1a;font-weight:700;letter-spacing:-0.44px;">None</span>
<span class="t" style="left:2352px;top:1349.41px;line-height:28.38px;font-size:20.27px;color:#444;-webkit-text-stroke:0.28px #444;letter-spacing:0.25px;">Description</span>
<span class="t" style="left:2352px;top:1387.41px;line-height:30.78px;font-size:21.98px;color:#1a1a1a;font-weight:700;letter-spacing:0.68px;">-</span>
<div style="left:46px;top:1360px;width:2918.8px;height:456.8px;background:#e7f4f4;border:3.2px solid #c6d8d8;border-top:none;border-radius:0 0 16px 16px"></div>
<div style="left:46px;top:1355.6px;width:2925.2px;height:11.2px;background:linear-gradient(rgba(190,190,190,0.25),#a6a6a6 45%,#a9acac 65%,#d5e0e0)"></div>
<div style="left:324px;top:1399.6px;width:37.6px;height:20px;border:2.8px solid #555;border-radius:12.8px"></div>
<div style="left:402px;top:1386.4px;width:304.8px;height:47.6px;border:3.2px solid #7c8686;border-radius:8px"></div>
<div style="left:728.8px;top:1386.4px;width:283.6px;height:47.6px;border:3.2px solid #7c8686;border-radius:8px"></div>
<svg style="left:986.4px;top:1409.8px" width="12" height="8.4" viewBox="0 0 3.0 2.10"><path d="M0.2 0.3 L1.5 1.5 L2.8 0.3" fill="none" stroke="#5b6666" stroke-width="0.85" stroke-linecap="round" stroke-linejoin="round"/></svg>
<div style="left:2949.6px;top:1464.8px;width:11.2px;height:51.2px;background:#d2dcdc;border-radius:5.6px"></div>
<svg style="left:93.2px;top:1471.8px" width="17.2" height="17.2" viewBox="0 0 4.3 4.3"><path d="M0.4 0.4 L3.9 3.9 M3.9 0.4 L0.4 3.9" fill="none" stroke="#3a3a3a" stroke-width="0.75" stroke-linecap="round"/></svg>
<svg style="left:93.2px;top:1515.8px" width="17.2" height="17.2" viewBox="0 0 4.3 4.3"><path d="M0.4 0.4 L3.9 3.9 M3.9 0.4 L0.4 3.9" fill="none" stroke="#3a3a3a" stroke-width="0.75" stroke-linecap="round"/></svg>
<svg style="left:93.2px;top:1559px" width="17.2" height="17.2" viewBox="0 0 4.3 4.3"><path d="M0.4 0.4 L3.9 3.9 M3.9 0.4 L0.4 3.9" fill="none" stroke="#3a3a3a" stroke-width="0.75" stroke-linecap="round"/></svg>
<svg style="left:93.2px;top:1602.6px" width="17.2" height="17.2" viewBox="0 0 4.3 4.3"><path d="M0.4 0.4 L3.9 3.9 M3.9 0.4 L0.4 3.9" fill="none" stroke="#3a3a3a" stroke-width="0.75" stroke-linecap="round"/></svg>
<svg style="left:93.2px;top:1645.4px" width="17.2" height="17.2" viewBox="0 0 4.3 4.3"><path d="M0.4 0.4 L3.9 3.9 M3.9 0.4 L0.4 3.9" fill="none" stroke="#3a3a3a" stroke-width="0.75" stroke-linecap="round"/></svg>
<svg style="left:93.2px;top:1688.6px" width="17.2" height="17.2" viewBox="0 0 4.3 4.3"><path d="M0.4 0.4 L3.9 3.9 M3.9 0.4 L0.4 3.9" fill="none" stroke="#3a3a3a" stroke-width="0.75" stroke-linecap="round"/></svg>
<svg style="left:93.2px;top:1731.8px" width="17.2" height="17.2" viewBox="0 0 4.3 4.3"><path d="M0.4 0.4 L3.9 3.9 M3.9 0.4 L0.4 3.9" fill="none" stroke="#3a3a3a" stroke-width="0.75" stroke-linecap="round"/></svg>
<svg style="left:93.2px;top:1775.8px" width="17.2" height="17.2" viewBox="0 0 4.3 4.3"><path d="M0.4 0.4 L3.9 3.9 M3.9 0.4 L0.4 3.9" fill="none" stroke="#3a3a3a" stroke-width="0.75" stroke-linecap="round"/></svg>
<svg style="left:545.2px;top:1471.8px" width="17.2" height="17.2" viewBox="0 0 4.3 4.3"><path d="M0.4 0.4 L3.9 3.9 M3.9 0.4 L0.4 3.9" fill="none" stroke="#3a3a3a" stroke-width="0.75" stroke-linecap="round"/></svg>
<svg style="left:545.2px;top:1515.8px" width="17.2" height="17.2" viewBox="0 0 4.3 4.3"><path d="M0.4 0.4 L3.9 3.9 M3.9 0.4 L0.4 3.9" fill="none" stroke="#3a3a3a" stroke-width="0.75" stroke-linecap="round"/></svg>
<svg style="left:545.2px;top:1559px" width="17.2" height="17.2" viewBox="0 0 4.3 4.3"><path d="M0.4 0.4 L3.9 3.9 M3.9 0.4 L0.4 3.9" fill="none" stroke="#3a3a3a" stroke-width="0.75" stroke-linecap="round"/></svg>
<svg style="left:545.2px;top:1602.6px" width="17.2" height="17.2" viewBox="0 0 4.3 4.3"><path d="M0.4 0.4 L3.9 3.9 M3.9 0.4 L0.4 3.9" fill="none" stroke="#3a3a3a" stroke-width="0.75" stroke-linecap="round"/></svg>
<svg style="left:545.2px;top:1645.4px" width="17.2" height="17.2" viewBox="0 0 4.3 4.3"><path d="M0.4 0.4 L3.9 3.9 M3.9 0.4 L0.4 3.9" fill="none" stroke="#3a3a3a" stroke-width="0.75" stroke-linecap="round"/></svg>
<svg style="left:545.2px;top:1688.6px" width="17.2" height="17.2" viewBox="0 0 4.3 4.3"><path d="M0.4 0.4 L3.9 3.9 M3.9 0.4 L0.4 3.9" fill="none" stroke="#3a3a3a" stroke-width="0.75" stroke-linecap="round"/></svg>
<svg style="left:545.2px;top:1731.8px" width="17.2" height="17.2" viewBox="0 0 4.3 4.3"><path d="M0.4 0.4 L3.9 3.9 M3.9 0.4 L0.4 3.9" fill="none" stroke="#3a3a3a" stroke-width="0.75" stroke-linecap="round"/></svg>
<svg style="left:545.2px;top:1775.8px" width="17.2" height="17.2" viewBox="0 0 4.3 4.3"><path d="M0.4 0.4 L3.9 3.9 M3.9 0.4 L0.4 3.9" fill="none" stroke="#3a3a3a" stroke-width="0.75" stroke-linecap="round"/></svg>
<svg style="left:997.2px;top:1471.8px" width="17.2" height="17.2" viewBox="0 0 4.3 4.3"><path d="M0.4 0.4 L3.9 3.9 M3.9 0.4 L0.4 3.9" fill="none" stroke="#3a3a3a" stroke-width="0.75" stroke-linecap="round"/></svg>
<svg style="left:997.2px;top:1515.8px" width="17.2" height="17.2" viewBox="0 0 4.3 4.3"><path d="M0.4 0.4 L3.9 3.9 M3.9 0.4 L0.4 3.9" fill="none" stroke="#3a3a3a" stroke-width="0.75" stroke-linecap="round"/></svg>
<svg style="left:997.2px;top:1559px" width="17.2" height="17.2" viewBox="0 0 4.3 4.3"><path d="M0.4 0.4 L3.9 3.9 M3.9 0.4 L0.4 3.9" fill="none" stroke="#3a3a3a" stroke-width="0.75" stroke-linecap="round"/></svg>
<svg style="left:997.2px;top:1602.6px" width="17.2" height="17.2" viewBox="0 0 4.3 4.3"><path d="M0.4 0.4 L3.9 3.9 M3.9 0.4 L0.4 3.9" fill="none" stroke="#3a3a3a" stroke-width="0.75" stroke-linecap="round"/></svg>
<svg style="left:997.2px;top:1645.4px" width="17.2" height="17.2" viewBox="0 0 4.3 4.3"><path d="M0.4 0.4 L3.9 3.9 M3.9 0.4 L0.4 3.9" fill="none" stroke="#3a3a3a" stroke-width="0.75" stroke-linecap="round"/></svg>
<svg style="left:997.2px;top:1688.6px" width="17.2" height="17.2" viewBox="0 0 4.3 4.3"><path d="M0.4 0.4 L3.9 3.9 M3.9 0.4 L0.4 3.9" fill="none" stroke="#3a3a3a" stroke-width="0.75" stroke-linecap="round"/></svg>
<svg style="left:997.2px;top:1731.8px" width="17.2" height="17.2" viewBox="0 0 4.3 4.3"><path d="M0.4 0.4 L3.9 3.9 M3.9 0.4 L0.4 3.9" fill="none" stroke="#3a3a3a" stroke-width="0.75" stroke-linecap="round"/></svg>
<svg style="left:997.2px;top:1775.8px" width="17.2" height="17.2" viewBox="0 0 4.3 4.3"><path d="M0.4 0.4 L3.9 3.9 M3.9 0.4 L0.4 3.9" fill="none" stroke="#3a3a3a" stroke-width="0.75" stroke-linecap="round"/></svg>
<svg style="left:1449.2px;top:1471.8px" width="17.2" height="17.2" viewBox="0 0 4.3 4.3"><path d="M0.4 0.4 L3.9 3.9 M3.9 0.4 L0.4 3.9" fill="none" stroke="#3a3a3a" stroke-width="0.75" stroke-linecap="round"/></svg>
<svg style="left:1449.2px;top:1515.8px" width="17.2" height="17.2" viewBox="0 0 4.3 4.3"><path d="M0.4 0.4 L3.9 3.9 M3.9 0.4 L0.4 3.9" fill="none" stroke="#3a3a3a" stroke-width="0.75" stroke-linecap="round"/></svg>
<svg style="left:1449.2px;top:1559px" width="17.2" height="17.2" viewBox="0 0 4.3 4.3"><path d="M0.4 0.4 L3.9 3.9 M3.9 0.4 L0.4 3.9" fill="none" stroke="#3a3a3a" stroke-width="0.75" stroke-linecap="round"/></svg>
<svg style="left:1449.2px;top:1602.6px" width="17.2" height="17.2" viewBox="0 0 4.3 4.3"><path d="M0.4 0.4 L3.9 3.9 M3.9 0.4 L0.4 3.9" fill="none" stroke="#3a3a3a" stroke-width="0.75" stroke-linecap="round"/></svg>
<svg style="left:1449.2px;top:1645.4px" width="17.2" height="17.2" viewBox="0 0 4.3 4.3"><path d="M0.4 0.4 L3.9 3.9 M3.9 0.4 L0.4 3.9" fill="none" stroke="#3a3a3a" stroke-width="0.75" stroke-linecap="round"/></svg>
<svg style="left:1449.2px;top:1688.6px" width="17.2" height="17.2" viewBox="0 0 4.3 4.3"><path d="M0.4 0.4 L3.9 3.9 M3.9 0.4 L0.4 3.9" fill="none" stroke="#3a3a3a" stroke-width="0.75" stroke-linecap="round"/></svg>
<svg style="left:1449.2px;top:1731.8px" width="17.2" height="17.2" viewBox="0 0 4.3 4.3"><path d="M0.4 0.4 L3.9 3.9 M3.9 0.4 L0.4 3.9" fill="none" stroke="#3a3a3a" stroke-width="0.75" stroke-linecap="round"/></svg>
<svg style="left:1449.2px;top:1775.8px" width="17.2" height="17.2" viewBox="0 0 4.3 4.3"><path d="M0.4 0.4 L3.9 3.9 M3.9 0.4 L0.4 3.9" fill="none" stroke="#3a3a3a" stroke-width="0.75" stroke-linecap="round"/></svg>
<svg style="left:1901.2px;top:1471.8px" width="17.2" height="17.2" viewBox="0 0 4.3 4.3"><path d="M0.4 0.4 L3.9 3.9 M3.9 0.4 L0.4 3.9" fill="none" stroke="#3a3a3a" stroke-width="0.75" stroke-linecap="round"/></svg>
<svg style="left:1901.2px;top:1515.8px" width="17.2" height="17.2" viewBox="0 0 4.3 4.3"><path d="M0.4 0.4 L3.9 3.9 M3.9 0.4 L0.4 3.9" fill="none" stroke="#3a3a3a" stroke-width="0.75" stroke-linecap="round"/></svg>
<svg style="left:1901.2px;top:1559px" width="17.2" height="17.2" viewBox="0 0 4.3 4.3"><path d="M0.4 0.4 L3.9 3.9 M3.9 0.4 L0.4 3.9" fill="none" stroke="#3a3a3a" stroke-width="0.75" stroke-linecap="round"/></svg>
<svg style="left:1901.2px;top:1602.6px" width="17.2" height="17.2" viewBox="0 0 4.3 4.3"><path d="M0.4 0.4 L3.9 3.9 M3.9 0.4 L0.4 3.9" fill="none" stroke="#3a3a3a" stroke-width="0.75" stroke-linecap="round"/></svg>
<svg style="left:1901.2px;top:1645.4px" width="17.2" height="17.2" viewBox="0 0 4.3 4.3"><path d="M0.4 0.4 L3.9 3.9 M3.9 0.4 L0.4 3.9" fill="none" stroke="#3a3a3a" stroke-width="0.75" stroke-linecap="round"/></svg>
<svg style="left:1901.2px;top:1688.6px" width="17.2" height="17.2" viewBox="0 0 4.3 4.3"><path d="M0.4 0.4 L3.9 3.9 M3.9 0.4 L0.4 3.9" fill="none" stroke="#3a3a3a" stroke-width="0.75" stroke-linecap="round"/></svg>
<svg style="left:1901.2px;top:1731.8px" width="17.2" height="17.2" viewBox="0 0 4.3 4.3"><path d="M0.4 0.4 L3.9 3.9 M3.9 0.4 L0.4 3.9" fill="none" stroke="#3a3a3a" stroke-width="0.75" stroke-linecap="round"/></svg>
<svg style="left:1901.2px;top:1775.8px" width="17.2" height="17.2" viewBox="0 0 4.3 4.3"><path d="M0.4 0.4 L3.9 3.9 M3.9 0.4 L0.4 3.9" fill="none" stroke="#3a3a3a" stroke-width="0.75" stroke-linecap="round"/></svg>
<svg style="left:2353.2px;top:1471.8px" width="17.2" height="17.2" viewBox="0 0 4.3 4.3"><path d="M0.4 0.4 L3.9 3.9 M3.9 0.4 L0.4 3.9" fill="none" stroke="#3a3a3a" stroke-width="0.75" stroke-linecap="round"/></svg>
<svg style="left:2353.2px;top:1515.8px" width="17.2" height="17.2" viewBox="0 0 4.3 4.3"><path d="M0.4 0.4 L3.9 3.9 M3.9 0.4 L0.4 3.9" fill="none" stroke="#3a3a3a" stroke-width="0.75" stroke-linecap="round"/></svg>
<svg style="left:2353.2px;top:1559px" width="17.2" height="17.2" viewBox="0 0 4.3 4.3"><path d="M0.4 0.4 L3.9 3.9 M3.9 0.4 L0.4 3.9" fill="none" stroke="#3a3a3a" stroke-width="0.75" stroke-linecap="round"/></svg>
<svg style="left:2353.2px;top:1602.6px" width="17.2" height="17.2" viewBox="0 0 4.3 4.3"><path d="M0.4 0.4 L3.9 3.9 M3.9 0.4 L0.4 3.9" fill="none" stroke="#3a3a3a" stroke-width="0.75" stroke-linecap="round"/></svg>
<svg style="left:2353.2px;top:1645.4px" width="17.2" height="17.2" viewBox="0 0 4.3 4.3"><path d="M0.4 0.4 L3.9 3.9 M3.9 0.4 L0.4 3.9" fill="none" stroke="#3a3a3a" stroke-width="0.75" stroke-linecap="round"/></svg>
<svg style="left:2353.2px;top:1688.6px" width="17.2" height="17.2" viewBox="0 0 4.3 4.3"><path d="M0.4 0.4 L3.9 3.9 M3.9 0.4 L0.4 3.9" fill="none" stroke="#3a3a3a" stroke-width="0.75" stroke-linecap="round"/></svg>
<svg style="left:2353.2px;top:1731.8px" width="17.2" height="17.2" viewBox="0 0 4.3 4.3"><path d="M0.4 0.4 L3.9 3.9 M3.9 0.4 L0.4 3.9" fill="none" stroke="#3a3a3a" stroke-width="0.75" stroke-linecap="round"/></svg>
<svg style="left:2353.2px;top:1775.8px" width="17.2" height="17.2" viewBox="0 0 4.3 4.3"><path d="M0.4 0.4 L3.9 3.9 M3.9 0.4 L0.4 3.9" fill="none" stroke="#3a3a3a" stroke-width="0.75" stroke-linecap="round"/></svg>
<span class="t" style="left:80px;top:1392.43px;line-height:46.34px;font-size:33.1px;color:#1a1a1a;font-weight:700;letter-spacing:0.1px;">Selected items</span>
<span class="t" style="left:340px;top:1399.8px;line-height:25.2px;font-size:18px;color:#444;-webkit-text-stroke:1.04px #444;letter-spacing:0.78px;">6</span>
<span class="t" style="left:421.2px;top:1394.75px;line-height:34.5px;font-size:24.64px;color:#6a7474;-webkit-text-stroke:1.04px #6a7474;letter-spacing:1.01px;">Open in Schilling client</span>
<span class="t" style="left:748px;top:1394.75px;line-height:34.5px;font-size:24.64px;color:#6a7474;-webkit-text-stroke:1.04px #6a7474;letter-spacing:1.39px;">Settlement options</span>
<span class="t" style="left:1053.2px;top:1394.75px;line-height:34.5px;font-size:24.64px;color:#6a7474;-webkit-text-stroke:1.04px #6a7474;letter-spacing:1.05px;">Clear selection</span>
<span class="t" style="left:132px;top:1464.13px;line-height:31.75px;font-size:22.68px;color:#222;-webkit-text-stroke:0.28px #222;letter-spacing:0.41px;">739284615</span>
<span class="t" style="left:258.8px;top:1464.13px;line-height:31.75px;font-size:22.68px;color:#222;-webkit-text-stroke:0.28px #222;letter-spacing:-0.13px;">Hansen, Freja</span>
<span class="t" style="left:132px;top:1508.13px;line-height:31.75px;font-size:22.68px;color:#222;-webkit-text-stroke:0.28px #222;letter-spacing:0.41px;">123456789</span>
<span class="t" style="left:258.8px;top:1508.13px;line-height:31.75px;font-size:22.68px;color:#222;-webkit-text-stroke:0.28px #222;letter-spacing:-0.56px;">Berg, Nora</span>
<span class="t" style="left:132px;top:1551.33px;line-height:31.75px;font-size:22.68px;color:#222;-webkit-text-stroke:0.28px #222;letter-spacing:0.41px;">678901234</span>
<span class="t" style="left:258.8px;top:1551.33px;line-height:31.75px;font-size:22.68px;color:#222;-webkit-text-stroke:0.28px #222;letter-spacing:0.14px;">Nielsen, Sofia</span>
<span class="t" style="left:132px;top:1594.93px;line-height:31.75px;font-size:22.68px;color:#222;-webkit-text-stroke:0.28px #222;letter-spacing:0.41px;">582947301</span>
<span class="t" style="left:258.8px;top:1594.93px;line-height:31.75px;font-size:22.68px;color:#222;-webkit-text-stroke:0.28px #222;letter-spacing:0px;">Nielsen, Magnus</span>
<span class="t" style="left:132px;top:1637.73px;line-height:31.75px;font-size:22.68px;color:#222;-webkit-text-stroke:0.28px #222;letter-spacing:0.41px;">246813579</span>
<span class="t" style="left:258.8px;top:1637.73px;line-height:31.75px;font-size:22.68px;color:#222;-webkit-text-stroke:0.28px #222;letter-spacing:0.14px;">Christensen, Elias</span>
<span class="t" style="left:132px;top:1680.93px;line-height:31.75px;font-size:22.68px;color:#222;-webkit-text-stroke:0.28px #222;letter-spacing:0.41px;">802579136</span>
<span class="t" style="left:258.8px;top:1680.93px;line-height:31.75px;font-size:22.68px;color:#222;-webkit-text-stroke:0.28px #222;letter-spacing:-0.1px;">Rasmussen, Anton</span>
<span class="t" style="left:132px;top:1724.13px;line-height:31.75px;font-size:22.68px;color:#222;-webkit-text-stroke:0.28px #222;letter-spacing:0.41px;">468135790</span>
<span class="t" style="left:258.8px;top:1724.13px;line-height:31.75px;font-size:22.68px;color:#222;-webkit-text-stroke:0.28px #222;letter-spacing:-0.38px;">Andersen, Noah</span>
<span class="t" style="left:132px;top:1768.13px;line-height:31.75px;font-size:22.68px;color:#222;-webkit-text-stroke:0.28px #222;letter-spacing:0.41px;">024791356</span>
<span class="t" style="left:258.8px;top:1768.13px;line-height:31.75px;font-size:22.68px;color:#222;-webkit-text-stroke:0.28px #222;letter-spacing:-0.19px;">Berg, Oliver</span>
<span class="t" style="left:584px;top:1464.13px;line-height:31.75px;font-size:22.68px;color:#222;-webkit-text-stroke:0.28px #222;letter-spacing:0.41px;">918273645</span>
<span class="t" style="left:710.8px;top:1464.13px;line-height:31.75px;font-size:22.68px;color:#222;-webkit-text-stroke:0.28px #222;letter-spacing:-0.13px;">Sørensen, Emil</span>
<span class="t" style="left:584px;top:1508.13px;line-height:31.75px;font-size:22.68px;color:#222;-webkit-text-stroke:0.28px #222;letter-spacing:0.41px;">987654321</span>
<span class="t" style="left:710.8px;top:1508.13px;line-height:31.75px;font-size:22.68px;color:#222;-webkit-text-stroke:0.28px #222;letter-spacing:0.2px;">Lund, Victor</span>
<span class="t" style="left:584px;top:1551.33px;line-height:31.75px;font-size:22.68px;color:#222;-webkit-text-stroke:0.28px #222;letter-spacing:0.41px;">789012345</span>
<span class="t" style="left:710.8px;top:1551.33px;line-height:31.75px;font-size:22.68px;color:#222;-webkit-text-stroke:0.28px #222;letter-spacing:0.1px;">Hansen, Aksel</span>
<span class="t" style="left:584px;top:1594.93px;line-height:31.75px;font-size:22.68px;color:#222;-webkit-text-stroke:0.28px #222;letter-spacing:0.41px;">672839405</span>
<span class="t" style="left:710.8px;top:1594.93px;line-height:31.75px;font-size:22.68px;color:#222;-webkit-text-stroke:0.28px #222;letter-spacing:-0.02px;">Christensen, Maja</span>
<span class="t" style="left:584px;top:1637.73px;line-height:31.75px;font-size:22.68px;color:#222;-webkit-text-stroke:0.28px #222;letter-spacing:0.41px;">357924680</span>
<span class="t" style="left:710.8px;top:1637.73px;line-height:31.75px;font-size:22.68px;color:#222;-webkit-text-stroke:0.28px #222;letter-spacing:-0.11px;">Madsen, Ida</span>
<span class="t" style="left:584px;top:1680.93px;line-height:31.75px;font-size:22.68px;color:#222;-webkit-text-stroke:0.28px #222;letter-spacing:0.41px;">913680247</span>
<span class="t" style="left:710.8px;top:1680.93px;line-height:31.75px;font-size:22.68px;color:#222;-webkit-text-stroke:0.28px #222;letter-spacing:-0.24px;">Mortensen, Clara</span>
<span class="t" style="left:584px;top:1724.13px;line-height:31.75px;font-size:22.68px;color:#222;-webkit-text-stroke:0.28px #222;letter-spacing:0.41px;">579246801</span>
<span class="t" style="left:710.8px;top:1724.13px;line-height:31.75px;font-size:22.68px;color:#222;-webkit-text-stroke:0.28px #222;letter-spacing:-0.19px;">Sørensen, Sofia</span>
<span class="t" style="left:584px;top:1768.13px;line-height:31.75px;font-size:22.68px;color:#222;-webkit-text-stroke:0.28px #222;letter-spacing:0.41px;">135802467</span>
<span class="t" style="left:710.8px;top:1768.13px;line-height:31.75px;font-size:22.68px;color:#222;-webkit-text-stroke:0.28px #222;letter-spacing:-0.26px;">Lund, Nora</span>
<span class="t" style="left:1036px;top:1464.13px;line-height:31.75px;font-size:22.68px;color:#222;-webkit-text-stroke:0.28px #222;letter-spacing:0.41px;">456789123</span>
<span class="t" style="left:1162.8px;top:1464.13px;line-height:31.75px;font-size:22.68px;color:#222;-webkit-text-stroke:0.28px #222;letter-spacing:0.09px;">Larsen, Ingrid</span>
<span class="t" style="left:1036px;top:1508.13px;line-height:31.75px;font-size:22.68px;color:#222;-webkit-text-stroke:0.28px #222;letter-spacing:0.41px;">234567890</span>
<span class="t" style="left:1162.8px;top:1508.13px;line-height:31.75px;font-size:22.68px;color:#222;-webkit-text-stroke:0.28px #222;letter-spacing:0.12px;">Thomsen, Ella</span>
<span class="t" style="left:1036px;top:1551.33px;line-height:31.75px;font-size:22.68px;color:#222;-webkit-text-stroke:0.28px #222;letter-spacing:0.41px;">654321789</span>
<span class="t" style="left:1162.8px;top:1551.33px;line-height:31.75px;font-size:22.68px;color:#222;-webkit-text-stroke:0.28px #222;letter-spacing:0px;">Kjær, Oliver</span>
<span class="t" style="left:1036px;top:1594.93px;line-height:31.75px;font-size:22.68px;color:#222;-webkit-text-stroke:0.28px #222;letter-spacing:0.41px;">890123456</span>
<span class="t" style="left:1162.8px;top:1594.93px;line-height:31.75px;font-size:22.68px;color:#222;-webkit-text-stroke:0.28px #222;letter-spacing:0.16px;">Jensen, Selma</span>
<span class="t" style="left:1036px;top:1637.73px;line-height:31.75px;font-size:22.68px;color:#222;-webkit-text-stroke:0.28px #222;letter-spacing:0.41px;">468135792</span>
<span class="t" style="left:1162.8px;top:1637.73px;line-height:31.75px;font-size:22.68px;color:#222;-webkit-text-stroke:0.28px #222;letter-spacing:0.19px;">Kjær, William</span>
<span class="t" style="left:1036px;top:1680.93px;line-height:31.75px;font-size:22.68px;color:#222;-webkit-text-stroke:0.28px #222;letter-spacing:0.41px;">024791358</span>
<span class="t" style="left:1162.8px;top:1680.93px;line-height:31.75px;font-size:22.68px;color:#222;-webkit-text-stroke:0.28px #222;letter-spacing:-0.01px;">Olsen, Leo</span>
<span class="t" style="left:1036px;top:1724.13px;line-height:31.75px;font-size:22.68px;color:#222;-webkit-text-stroke:0.28px #222;letter-spacing:0.41px;">680357912</span>
<span class="t" style="left:1162.8px;top:1724.13px;line-height:31.75px;font-size:22.68px;color:#222;-webkit-text-stroke:0.28px #222;letter-spacing:0.23px;">Larsen, Emil</span>
<span class="t" style="left:1036px;top:1768.13px;line-height:31.75px;font-size:22.68px;color:#222;-webkit-text-stroke:0.28px #222;letter-spacing:0.41px;">246913578</span>
<span class="t" style="left:1162.8px;top:1768.13px;line-height:31.75px;font-size:22.68px;color:#222;-webkit-text-stroke:0.28px #222;letter-spacing:0.21px;">Thomsen, Aksel</span>
<span class="t" style="left:1488px;top:1464.13px;line-height:31.75px;font-size:22.68px;color:#222;-webkit-text-stroke:0.28px #222;letter-spacing:0.41px;">321654987</span>
<span class="t" style="left:1614.8px;top:1464.13px;line-height:31.75px;font-size:22.68px;color:#222;-webkit-text-stroke:0.28px #222;letter-spacing:0.43px;">Johansen, Felix</span>
<span class="t" style="left:1488px;top:1508.13px;line-height:31.75px;font-size:22.68px;color:#222;-webkit-text-stroke:0.28px #222;letter-spacing:0.41px;">345678901</span>
<span class="t" style="left:1614.8px;top:1508.13px;line-height:31.75px;font-size:22.68px;color:#222;-webkit-text-stroke:0.28px #222;letter-spacing:-0.3px;">Rasmussen, Noah</span>
<span class="t" style="left:1488px;top:1551.33px;line-height:31.75px;font-size:22.68px;color:#222;-webkit-text-stroke:0.28px #222;letter-spacing:0.41px;">789456123</span>
<span class="t" style="left:1614.8px;top:1551.33px;line-height:31.75px;font-size:22.68px;color:#222;-webkit-text-stroke:0.28px #222;letter-spacing:-0.23px;">Madsen, Clara</span>
<span class="t" style="left:1488px;top:1594.93px;line-height:31.75px;font-size:22.68px;color:#222;-webkit-text-stroke:0.28px #222;letter-spacing:0.41px;">901234567</span>
<span class="t" style="left:1614.8px;top:1594.93px;line-height:31.75px;font-size:22.68px;color:#222;-webkit-text-stroke:0.28px #222;letter-spacing:0.04px;">Andersen, Emilie</span>
<span class="t" style="left:1488px;top:1637.73px;line-height:31.75px;font-size:22.68px;color:#222;-webkit-text-stroke:0.28px #222;letter-spacing:0.41px;">579246803</span>
<span class="t" style="left:1614.8px;top:1637.73px;line-height:31.75px;font-size:22.68px;color:#222;-webkit-text-stroke:0.28px #222;letter-spacing:0.2px;">Berg, Liva</span>
<span class="t" style="left:1488px;top:1680.93px;line-height:31.75px;font-size:22.68px;color:#222;-webkit-text-stroke:0.28px #222;letter-spacing:0.41px;">135802469</span>
<span class="t" style="left:1614.8px;top:1680.93px;line-height:31.75px;font-size:22.68px;color:#222;-webkit-text-stroke:0.28px #222;letter-spacing:0.28px;">Nielsen, Ella</span>
<span class="t" style="left:1488px;top:1724.13px;line-height:31.75px;font-size:22.68px;color:#222;-webkit-text-stroke:0.28px #222;letter-spacing:0.41px;">791468023</span>
<span class="t" style="left:1614.8px;top:1724.13px;line-height:31.75px;font-size:22.68px;color:#222;-webkit-text-stroke:0.28px #222;letter-spacing:0.08px;">Christensen, Amalie</span>
<span class="t" style="left:1488px;top:1768.13px;line-height:31.75px;font-size:22.68px;color:#222;-webkit-text-stroke:0.28px #222;letter-spacing:0.41px;">357024689</span>
<span class="t" style="left:1614.8px;top:1768.13px;line-height:31.75px;font-size:22.68px;color:#222;-webkit-text-stroke:0.28px #222;letter-spacing:0.09px;">Rasmussen, Emilie</span>
<span class="t" style="left:1940px;top:1464.13px;line-height:31.75px;font-size:22.68px;color:#222;-webkit-text-stroke:0.28px #222;letter-spacing:0.41px;">405672198</span>
<span class="t" style="left:2066.8px;top:1464.13px;line-height:31.75px;font-size:22.68px;color:#222;-webkit-text-stroke:0.28px #222;letter-spacing:-0.02px;">Andersen, Linnea</span>
<span class="t" style="left:1940px;top:1508.13px;line-height:31.75px;font-size:22.68px;color:#222;-webkit-text-stroke:0.28px #222;letter-spacing:0.41px;">456789012</span>
<span class="t" style="left:2066.8px;top:1508.13px;line-height:31.75px;font-size:22.68px;color:#222;-webkit-text-stroke:0.28px #222;letter-spacing:-0.13px;">Mortensen, Freya</span>
<span class="t" style="left:1940px;top:1551.33px;line-height:31.75px;font-size:22.68px;color:#222;-webkit-text-stroke:0.28px #222;letter-spacing:0.41px;">867530912</span>
<span class="t" style="left:2066.8px;top:1551.33px;line-height:31.75px;font-size:22.68px;color:#222;-webkit-text-stroke:0.28px #222;letter-spacing:0.01px;">Jensen, Soren</span>
<span class="t" style="left:1940px;top:1594.93px;line-height:31.75px;font-size:22.68px;color:#222;-webkit-text-stroke:0.28px #222;letter-spacing:0.41px;">012345678</span>
<span class="t" style="left:2066.8px;top:1594.93px;line-height:31.75px;font-size:22.68px;color:#222;-webkit-text-stroke:0.28px #222;letter-spacing:-0.3px;">Sørensen, Magnus</span>
<span class="t" style="left:1940px;top:1637.73px;line-height:31.75px;font-size:22.68px;color:#222;-webkit-text-stroke:0.28px #222;letter-spacing:0.41px;">680357914</span>
<span class="t" style="left:2066.8px;top:1637.73px;line-height:31.75px;font-size:22.68px;color:#222;-webkit-text-stroke:0.28px #222;letter-spacing:0.06px;">Lund, Oliver</span>
<span class="t" style="left:1940px;top:1680.93px;line-height:31.75px;font-size:22.68px;color:#222;-webkit-text-stroke:0.28px #222;letter-spacing:0.41px;">246913578</span>
<span class="t" style="left:2066.8px;top:1680.93px;line-height:31.75px;font-size:22.68px;color:#222;-webkit-text-stroke:0.28px #222;letter-spacing:-0.06px;">Hansen, Viktor</span>
<span class="t" style="left:1940px;top:1724.13px;line-height:31.75px;font-size:22.68px;color:#222;-webkit-text-stroke:0.28px #222;letter-spacing:0.41px;">802579134</span>
<span class="t" style="left:2066.8px;top:1724.13px;line-height:31.75px;font-size:22.68px;color:#222;-webkit-text-stroke:0.28px #222;letter-spacing:0.26px;">Madsen, Felix</span>
<span class="t" style="left:1940px;top:1768.13px;line-height:31.75px;font-size:22.68px;color:#222;-webkit-text-stroke:0.28px #222;letter-spacing:0.41px;">468135790</span>
<span class="t" style="left:2066.8px;top:1768.13px;line-height:31.75px;font-size:22.68px;color:#222;-webkit-text-stroke:0.28px #222;letter-spacing:0.06px;">Mortensen, Lucas</span>
<span class="t" style="left:2392px;top:1464.13px;line-height:31.75px;font-size:22.68px;color:#222;-webkit-text-stroke:0.28px #222;letter-spacing:0.41px;">238947561</span>
<span class="t" style="left:2518.8px;top:1464.13px;line-height:31.75px;font-size:22.68px;color:#222;-webkit-text-stroke:0.28px #222;letter-spacing:-0.2px;">Pedersen, Bjorn</span>
<span class="t" style="left:2392px;top:1508.13px;line-height:31.75px;font-size:22.68px;color:#222;-webkit-text-stroke:0.28px #222;letter-spacing:0.41px;">567890123</span>
<span class="t" style="left:2518.8px;top:1508.13px;line-height:31.75px;font-size:22.68px;color:#222;-webkit-text-stroke:0.28px #222;letter-spacing:0.14px;">Olsen, Lucas</span>
<span class="t" style="left:2392px;top:1551.33px;line-height:31.75px;font-size:22.68px;color:#222;-webkit-text-stroke:0.28px #222;letter-spacing:0.41px;">194736820</span>
<span class="t" style="left:2518.8px;top:1551.33px;line-height:31.75px;font-size:22.68px;color:#222;-webkit-text-stroke:0.28px #222;letter-spacing:0.09px;">Olsen, Astrid</span>
<span class="t" style="left:2392px;top:1594.93px;line-height:31.75px;font-size:22.68px;color:#222;-webkit-text-stroke:0.28px #222;letter-spacing:0.41px;">135792468</span>
<span class="t" style="left:2518.8px;top:1594.93px;line-height:31.75px;font-size:22.68px;color:#222;-webkit-text-stroke:0.28px #222;letter-spacing:0.23px;">Larsen, Amalie</span>
<span class="t" style="left:2392px;top:1637.73px;line-height:31.75px;font-size:22.68px;color:#222;-webkit-text-stroke:0.28px #222;letter-spacing:0.41px;">791468025</span>
<span class="t" style="left:2518.8px;top:1637.73px;line-height:31.75px;font-size:22.68px;color:#222;-webkit-text-stroke:0.28px #222;letter-spacing:-0.01px;">Thomsen, Mia</span>
<span class="t" style="left:2392px;top:1680.93px;line-height:31.75px;font-size:22.68px;color:#222;-webkit-text-stroke:0.28px #222;letter-spacing:0.41px;">357024689</span>
<span class="t" style="left:2518.8px;top:1680.93px;line-height:31.75px;font-size:22.68px;color:#222;-webkit-text-stroke:0.28px #222;letter-spacing:0.26px;">Jensen, Freja</span>
<span class="t" style="left:2392px;top:1724.13px;line-height:31.75px;font-size:22.68px;color:#222;-webkit-text-stroke:0.28px #222;letter-spacing:0.41px;">913680245</span>
<span class="t" style="left:2518.8px;top:1724.13px;line-height:31.75px;font-size:22.68px;color:#222;-webkit-text-stroke:0.28px #222;letter-spacing:0.19px;">Kjær, Linnea</span>
<span class="t" style="left:2392px;top:1768.13px;line-height:31.75px;font-size:22.68px;color:#222;-webkit-text-stroke:0.28px #222;letter-spacing:0.41px;">579246801</span>
<span class="t" style="left:2518.8px;top:1768.13px;line-height:31.75px;font-size:22.68px;color:#222;-webkit-text-stroke:0.28px #222;letter-spacing:-0.08px;">Olsen, Maja</span>
</div></body></html>
